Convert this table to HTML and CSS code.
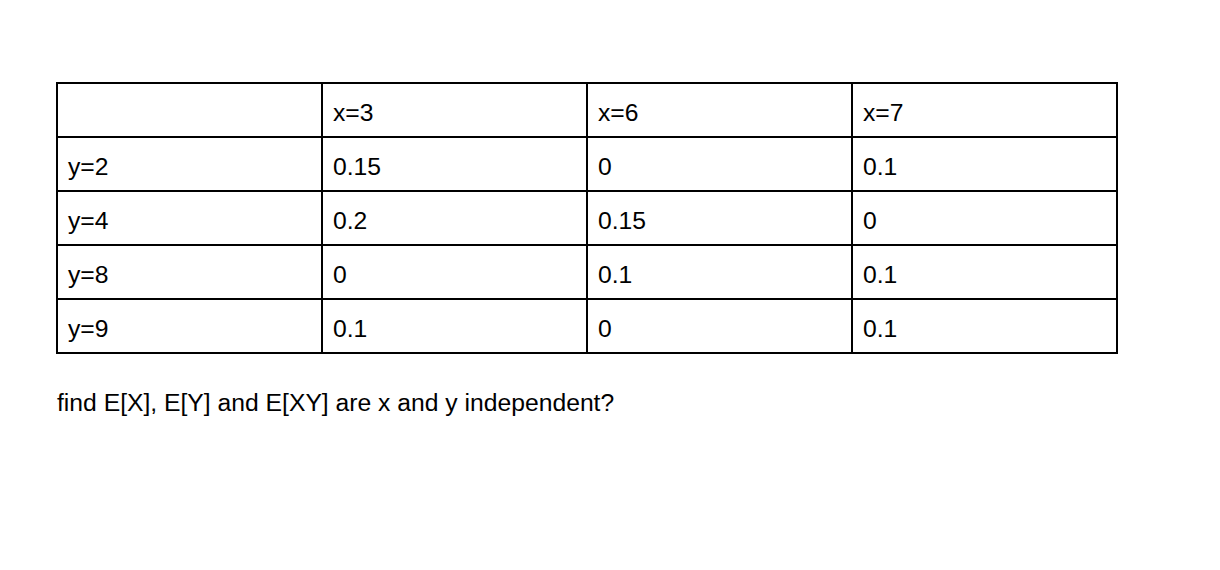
FILE: index.html
```html
<!DOCTYPE html>
<html>
<head>
<meta charset="utf-8">
<link rel="stylesheet" href="styles.css">
</head>
<body>
<main class="page">
  <table class="grid">
    <colgroup><col><col><col><col></colgroup>
    <tr><td></td><td>x=3</td><td>x=6</td><td>x=7</td></tr>
    <tr><td>y=2</td><td>0.15</td><td>0</td><td>0.1</td></tr>
    <tr><td>y=4</td><td>0.2</td><td>0.15</td><td>0</td></tr>
    <tr><td>y=8</td><td>0</td><td>0.1</td><td>0.1</td></tr>
    <tr><td>y=9</td><td>0.1</td><td>0</td><td>0.1</td></tr>
  </table>
  <p class="question">find E[X], E[Y] and E[XY] are x and y independent?</p>
</main>
</body>
</html>
```

FILE: styles.css
```css
html, body {
  margin: 0;
  background: #fff;
}
.page {
  padding: 82px 0 0 56px;
  font-family: "Liberation Sans", Arial, Helvetica, sans-serif;
  font-size: 24.7px;
  line-height: 28px;
  color: #000;
}
.grid {
  border-collapse: collapse;
  table-layout: fixed;
  width: 1062px;
}
.grid col {
  width: 25%;
}
.grid td {
  border: 2px solid #000;
  padding: 15px 10px 9px 10px;
  height: 28px;
  vertical-align: top;
  white-space: nowrap;
}
.question {
  margin: 35px 0 0 1px;
}
```
